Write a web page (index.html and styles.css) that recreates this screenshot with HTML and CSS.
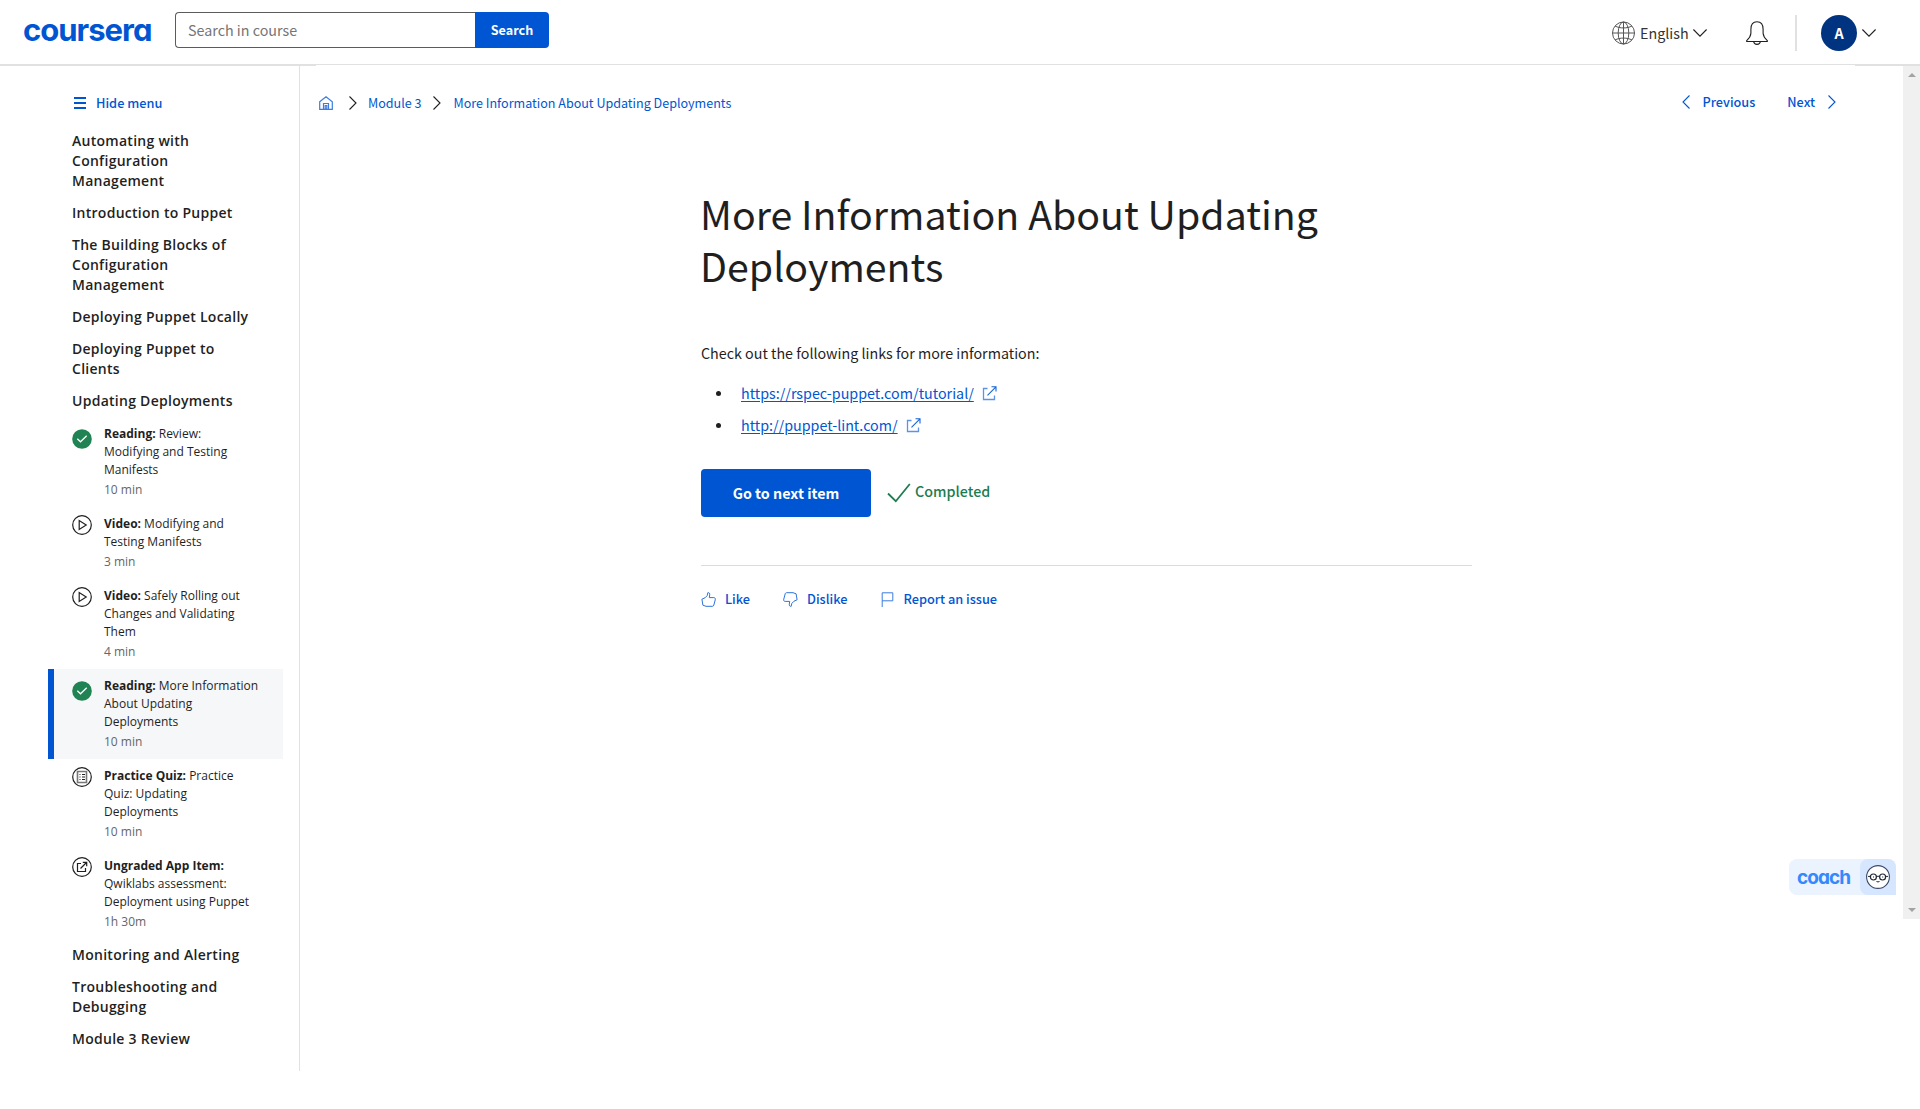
FILE: index.html
```html
<!DOCTYPE html>
<html lang="en">
<head>
<meta charset="utf-8">
<title>More Information About Updating Deployments | Coursera</title>
<link rel="stylesheet" href="styles.css">
</head>
<body>
<svg class="defs" width="0" height="0" aria-hidden="true">
  <symbol id="done" viewBox="0 0 20 20"><circle cx="10" cy="10" r="9.8" fill="#1f8354"/><path d="M5.3 9.8l3.2 3L14.7 6.8" fill="none" stroke="#fff" stroke-width="1.3"/></symbol>
  <symbol id="play" viewBox="0 0 20 20"><circle cx="10" cy="10" r="9.3" fill="none" stroke="#1f1f1f" stroke-width="1.2"/><path d="M7.2 5.6v8.8l7-4.4z" fill="none" stroke="#1f1f1f" stroke-width="1.2"/></symbol>
  <symbol id="quiz" viewBox="0 0 20 20"><circle cx="10" cy="10" r="9.3" fill="none" stroke="#1f1f1f" stroke-width="1.2"/><path d="M5.5 4.5h9v11h-9z" fill="none" stroke="#777" stroke-width="1.6"/><path d="M7.5 7.5h1M10 7.5h3M7.5 10h1M10 10h3M7.5 12.5h1M10 12.5h3" stroke="#1f1f1f" fill="none"/></symbol>
  <symbol id="app" viewBox="0 0 20 20"><circle cx="10" cy="10" r="9.3" fill="none" stroke="#1f1f1f" stroke-width="1.2"/><path d="M9 6.500H5.500v8h8V11M8.500 11.500l6-6M10.800 5.300h3.900v3.900" fill="none" stroke="#1f1f1f" stroke-width="1.2"/></symbol>
  <symbol id="external" viewBox="0 0 15 15"><path d="M5.5 2.5h-4v11h11v-4" fill="none" stroke="#5b93e8" stroke-width="1.3"/><path d="M5.5 9.3L13.7 1.1M9.5.8H14v4.6" fill="none" stroke="#1664d9" stroke-width="1.1"/></symbol>
  <symbol id="right" viewBox="0 0 8 14"><path d="M.5.5L7 7 .5 13.5" fill="none" stroke="currentColor" stroke-width="1.1"/></symbol>
  <symbol id="down" viewBox="0 0 14 8"><path d="M.4.5L7 7.1 13.6.5" fill="none" stroke="currentColor" stroke-width="1.1"/></symbol>
</svg>

<header class="topbar">
  <svg class="logo" width="130" height="30" viewBox="0 0 130 30"><text x="0" y="22.800" textLength="129.500" lengthAdjust="spacing">coursera</text></svg>
  <form class="search">
    <div class="search-field">Search in course</div>
    <div class="search-button">Search</div>
  </form>
  <div class="account">
    <svg width="23" height="24" viewBox="0 0 23 24" fill="none" stroke="#555"><circle cx="11.5" cy="12" r="11"/><ellipse cx="11.5" cy="12" rx="5.3" ry="11"/><path d="M.5 12h22M11.5 1v22M3 5c5 2.6 12 2.6 17 0M3 19c5-2.6 12-2.6 17 0"/></svg>
    <span class="language">English</span>
    <svg class="caret" width="14" height="8"><use href="#down"/></svg>
    <svg class="bell" width="22" height="24" viewBox="0 0 22 24" fill="none" stroke="#1f1f1f" stroke-width="1.1"><path d="M.7 19.6c2.2-2 4-4.200 4.200-7.300V8.200C4.900 3 7.500.7 11 .7s6.100 2.300 6.100 7.500v4.100c.2 3.100 2 5.300 4.200 7.300v.9H.7zM7.600 20.500c.3 1.900 1.600 2.900 3.400 2.900s3.100-1 3.400-2.900"/></svg>
    <span class="divider"></span>
    <span class="avatar">A</span>
    <svg class="avatar-caret" width="14" height="8"><use href="#down"/></svg>
  </div>
</header>

<div class="page">
  <aside class="sidebar">
    <a class="hide-menu"><svg width="12" height="12" viewBox="0 0 12 12"><path d="M0 1h12M0 6h12M0 11h12" stroke="#0056d2" stroke-width="2"/></svg>Hide menu</a>
    <nav>
      <h2>Automating with Configuration Management</h2>
      <h2>Introduction to Puppet</h2>
      <h2>The Building Blocks of Configuration Management</h2>
      <h2>Deploying Puppet Locally</h2>
      <h2>Deploying Puppet to Clients</h2>
      <h2>Updating Deployments</h2>
      <ul class="items">
        <li class="item done"><svg width="20" height="20"><use href="#done"/></svg><div class="item-text"><b>Reading:</b> Review: Modifying and Testing Manifests<span class="time">10 min</span></div></li>
        <li class="item"><svg width="20" height="20"><use href="#play"/></svg><div class="item-text"><b>Video:</b> Modifying and Testing Manifests<span class="time">3 min</span></div></li>
        <li class="item"><svg width="20" height="20"><use href="#play"/></svg><div class="item-text"><b>Video:</b> Safely Rolling out Changes and Validating Them<span class="time">4 min</span></div></li>
        <li class="item done active"><svg width="20" height="20"><use href="#done"/></svg><div class="item-text"><b>Reading:</b> More Information About Updating Deployments<span class="time">10 min</span></div></li>
        <li class="item"><svg width="20" height="20"><use href="#quiz"/></svg><div class="item-text"><b>Practice Quiz:</b> Practice Quiz: Updating Deployments<span class="time">10 min</span></div></li>
        <li class="item"><svg width="20" height="20"><use href="#app"/></svg><div class="item-text"><b>Ungraded App Item:</b> Qwiklabs assessment: Deployment using Puppet<span class="time">1h 30m</span></div></li>
      </ul>
      <h2>Monitoring and Alerting</h2>
      <h2>Troubleshooting and Debugging</h2>
      <h2>Module 3 Review</h2>
    </nav>
  </aside>

  <main class="content">
    <div class="crumb-row">
      <div class="crumbs">
        <svg class="home" width="14" height="14" viewBox="0 0 14 14" fill="none" stroke="#3b7de0" stroke-width="1.2"><path d="M.7 5.700L7 .8l6.300 4.900v7.600H.7zM4.500 13V7.500h5V13M6.200 9.500h1.600V13H6.200z"/></svg>
        <svg class="sep first" width="8" height="14"><use href="#right"/></svg>
        <span>Module 3</span>
        <svg class="sep" width="8" height="14"><use href="#right"/></svg>
        <span>More Information About Updating Deployments</span>
      </div>
      <div class="pager">
        <svg class="flip" width="8" height="14"><use href="#right"/></svg>
        <span class="previous">Previous</span>
        <span class="next">Next</span>
        <svg width="8" height="14"><use href="#right"/></svg>
      </div>
    </div>
    <article class="reading">
      <h1>More Information About Updating Deployments</h1>
      <p>Check out the following links for more information:</p>
      <ul class="links">
        <li><a>https://rspec-puppet.com/tutorial/</a><svg width="15" height="15"><use href="#external"/></svg></li>
        <li><a>http://puppet-lint.com/</a><svg width="15" height="15"><use href="#external"/></svg></li>
      </ul>
      <div class="finish">
        <div class="next-item">Go to next item</div>
        <svg width="24" height="20" viewBox="0 0 24 20"><path d="M1 10.500l7.800 7.700L22.800 1" fill="none" stroke="#1d7c50" stroke-width="1.800"/></svg>
        <span class="completed">Completed</span>
      </div>
      <div class="feedback">
        <span class="like"><svg width="15" height="15" viewBox="0 0 15 15" fill="none" stroke="#2d74dd"><path d="M.9 7.200L4 5.800 6.200 3.600 6.800.7c1.500-.3 2.200.9 1.900 2.200L8.300 5.600h4.500c1.500 0 1.700 1.200 1.400 2.400l-1.400 5.100c-.2.900-.7 1.200-1.500 1.200H5L1.900 13.200z"/></svg>Like</span>
        <span class="dislike"><svg width="15" height="15" viewBox="0 0 15 15" fill="none" stroke="#2d74dd"><path d="M14.100 7.800L11 9.200 8.800 11.400l-.6 2.900c-1.500.3-2.200-.9-1.900-2.200l.4-2.700H2.200C.7 9.400.5 8.200.8 7l1.400-5.100C2.400 1 2.900.7 3.700.7H10l3.100 1.100z"/></svg>Dislike</span>
        <span class="report"><svg width="13" height="15" viewBox="0 0 13 15" fill="none" stroke="#3b7de0"><path d="M1.200 15V.8h10.600v8H1.200"/></svg>Report an issue</span>
      </div>
    </article>
  </main>
  <div class="scrollbar"><i class="up"></i><i class="dn"></i></div>
</div>

<div class="coach">
  <svg class="coach-name" width="56" height="24" viewBox="0 0 56 24"><text x="0" y="18.500" textLength="54" lengthAdjust="spacing">coach</text></svg>
  <div class="coach-face"><svg width="24" height="24" viewBox="0 0 24 24" fill="none" stroke="#1f2533"><circle cx="12" cy="12" r="11.400" fill="#fff" stroke="#3a4868" stroke-width="1.100"/><circle cx="7.400" cy="12" r="3" stroke-width="1.200"/><circle cx="16.600" cy="12" r="3" stroke-width="1.200"/><path d="M10.400 11.300h3.200M2 11.400h2.400M19.600 11.400H22M10.500 16.500q1.500.9 3 0" stroke-width="1"/><path d="M7 12h1M16.200 12h1" stroke-width="1.200"/></svg></div>
</div>
</body>
</html>
```
FILE: styles.css
```css
* { box-sizing: border-box; }
body {
  margin: 0;
  background: #fff;
  color: #1f1f1f;
  font: 14.3px/24px "Noto Sans CJK SC", "Noto Sans", sans-serif;
  height: 1109px;
  overflow: hidden;
}
h1, h2, p, ul { margin: 0; padding: 0; }
ul { list-style: none; }
svg { display: block; flex: none; }
.defs { position: absolute; }

.topbar {
  position: relative;
  display: flex;
  height: 65px;
  border-bottom: 1px solid #e1e1e1;
}
.topbar::before, .topbar::after {
  content: "";
  position: absolute;
  top: 65px;
  height: 1px;
  background: #e1e1e1;
}
.topbar::before { left: 0; width: 316px; }
.topbar::after { right: 0; width: 65px; }
.logo { margin: 18px 0 0 23px; overflow: visible; }
.logo text, .coach-name text {
  font-family: Inter, sans-serif;
  font-weight: 700;
  font-feature-settings: "cv11";
}
.logo text { font-size: 31px; fill: #0056d2; }
.search { display: flex; margin: 12px 0 0 22px; height: 36px; }
.search-field {
  width: 300px;
  padding-left: 12px;
  border: 1px solid #5b5b5b;
  border-right: 0;
  border-radius: 4px 0 0 4px;
  color: #757575;
  line-height: 33px;
}
.search-button {
  width: 74px;
  background: #0056d2;
  border-radius: 0 4px 4px 0;
  color: #fff;
  font-size: 12.6px;
  font-weight: 600;
  line-height: 35px;
  text-align: center;
}
.account { display: flex; align-items: center; margin-left: auto; padding: 2px 44px 0 0; }
.language { margin-left: 5px; width: 48px; color: #333; }
.caret { margin-left: 5px; }
.bell { margin-left: 39px; }
.divider { width: 2px; height: 36px; margin-left: 27px; background: #e1e1e1; }
.avatar {
  width: 36px;
  height: 36px;
  margin-left: 24px;
  border-radius: 50%;
  background: #003380;
  color: #fff;
  font-weight: 700;
  line-height: 36px;
  text-align: center;
}
.avatar-caret { margin-left: 5px; }

.page { display: flex; align-items: flex-start; }
.sidebar {
  width: 300px;
  height: 1006px;
  padding-top: 26px;
  border-right: 1px solid #e1e1e1;
}
.hide-menu {
  display: flex;
  align-items: center;
  gap: 10px;
  margin: 0 0 10px 74px;
  color: #0056d2;
  font-size: 12.75px;
  font-weight: 500;
}
.sidebar h2 {
  width: 186px;
  margin-left: 72px;
  padding: 6px 0;
  font: 600 14px/20px "Open Sans", sans-serif;
  letter-spacing: .27px;
}
.item { display: flex; margin: 0 16px 0 48px; padding: 8px 0 8px 18px; border-left: 6px solid transparent; }
.item.done svg { margin-top: 4px; }
.item.active { background: #f5f7f8; border-left-color: #0056d2; }
.item-text {
  width: 155px;
  margin-left: 12px;
  font: 400 12px/18px "Open Sans", sans-serif;
}
.item-text b { font-weight: 700; }
.time { display: block; margin-top: 2px; color: #666; }

.content { flex: 1; height: 854px; }
.crumb-row { display: flex; justify-content: space-between; padding: 26px 67px 0 19px; height: 50px; color: #0056d2; font-size: 12.55px; }
.crumbs, .pager { display: flex; align-items: center; }
.sep { margin: 0 12px 0 12px; color: #1f1f1f; }
.sep.first { margin: 0 11px 0 16px; }
.pager { margin-top: -2px; font-size: 12.7px; font-weight: 500; }
.flip { transform: scaleX(-1); }
.previous { margin-left: 13px; }
.next { margin: 0 13px 0 32px; }

.reading { width: 771px; margin: 72px 0 0 401px; }
h1 { margin-left: -1px; font-size: 39.3px; font-weight: 400; line-height: 52px; }
.reading p { margin-top: 50px; }
.links { margin-top: 16px; }
.links li { display: flex; align-items: center; height: 24px; padding-left: 39px; }
.links li + li { margin-top: 8px; }
.links li::before { content: ""; width: 5px; height: 5px; margin: 0 20px 0 -24px; border-radius: 50%; background: #1f1f1f; }
.links a { color: #0056d2; text-decoration: underline; text-underline-offset: 2px; }
.links svg { margin-left: 8px; }
.finish { display: flex; align-items: center; margin-top: 32px; }
.next-item {
  width: 170px;
  height: 48px;
  margin-right: 16px;
  border-radius: 4px;
  background: #0056d2;
  color: #fff;
  font-weight: 700;
  line-height: 48px;
  text-align: center;
}
.completed { margin: -4px 0 0 4px; color: #1d7c50; font-weight: 500; }
.feedback {
  display: flex;
  margin-top: 48px;
  padding-top: 21px;
  border-top: 1px solid #dadcde;
  color: #0056d2;
  font-size: 12.75px;
  font-weight: 500;
}
.feedback span { display: flex; align-items: center; gap: 9px; }
.dislike { margin-left: 33px; }
.report { margin-left: 34px; }

.scrollbar { display: flex; flex-direction: column; justify-content: space-between; align-items: center; width: 17px; height: 853px; margin-top: 1px; padding: 7px 0; background: #f0f0f0; }
.scrollbar i { border: 4px solid transparent; }
.up { border-top: 0 !important; border-bottom-color: #a3a3a3 !important; }
.dn { border-bottom: 0 !important; border-top-color: #a3a3a3 !important; }

.coach { position: absolute; left: 1789px; top: 859px; display: flex; align-items: center; width: 107px; height: 36px; padding-left: 8px; border-radius: 8px 8px 0 8px; background: #ebf3ff; }
.coach-name text { font-size: 19px; fill: #3587fc; }
.coach-face { display: flex; align-items: center; justify-content: center; width: 36px; height: 36px; margin-left: auto; border-radius: 8px 8px 0 8px; background: #d6e6ff; }
```
